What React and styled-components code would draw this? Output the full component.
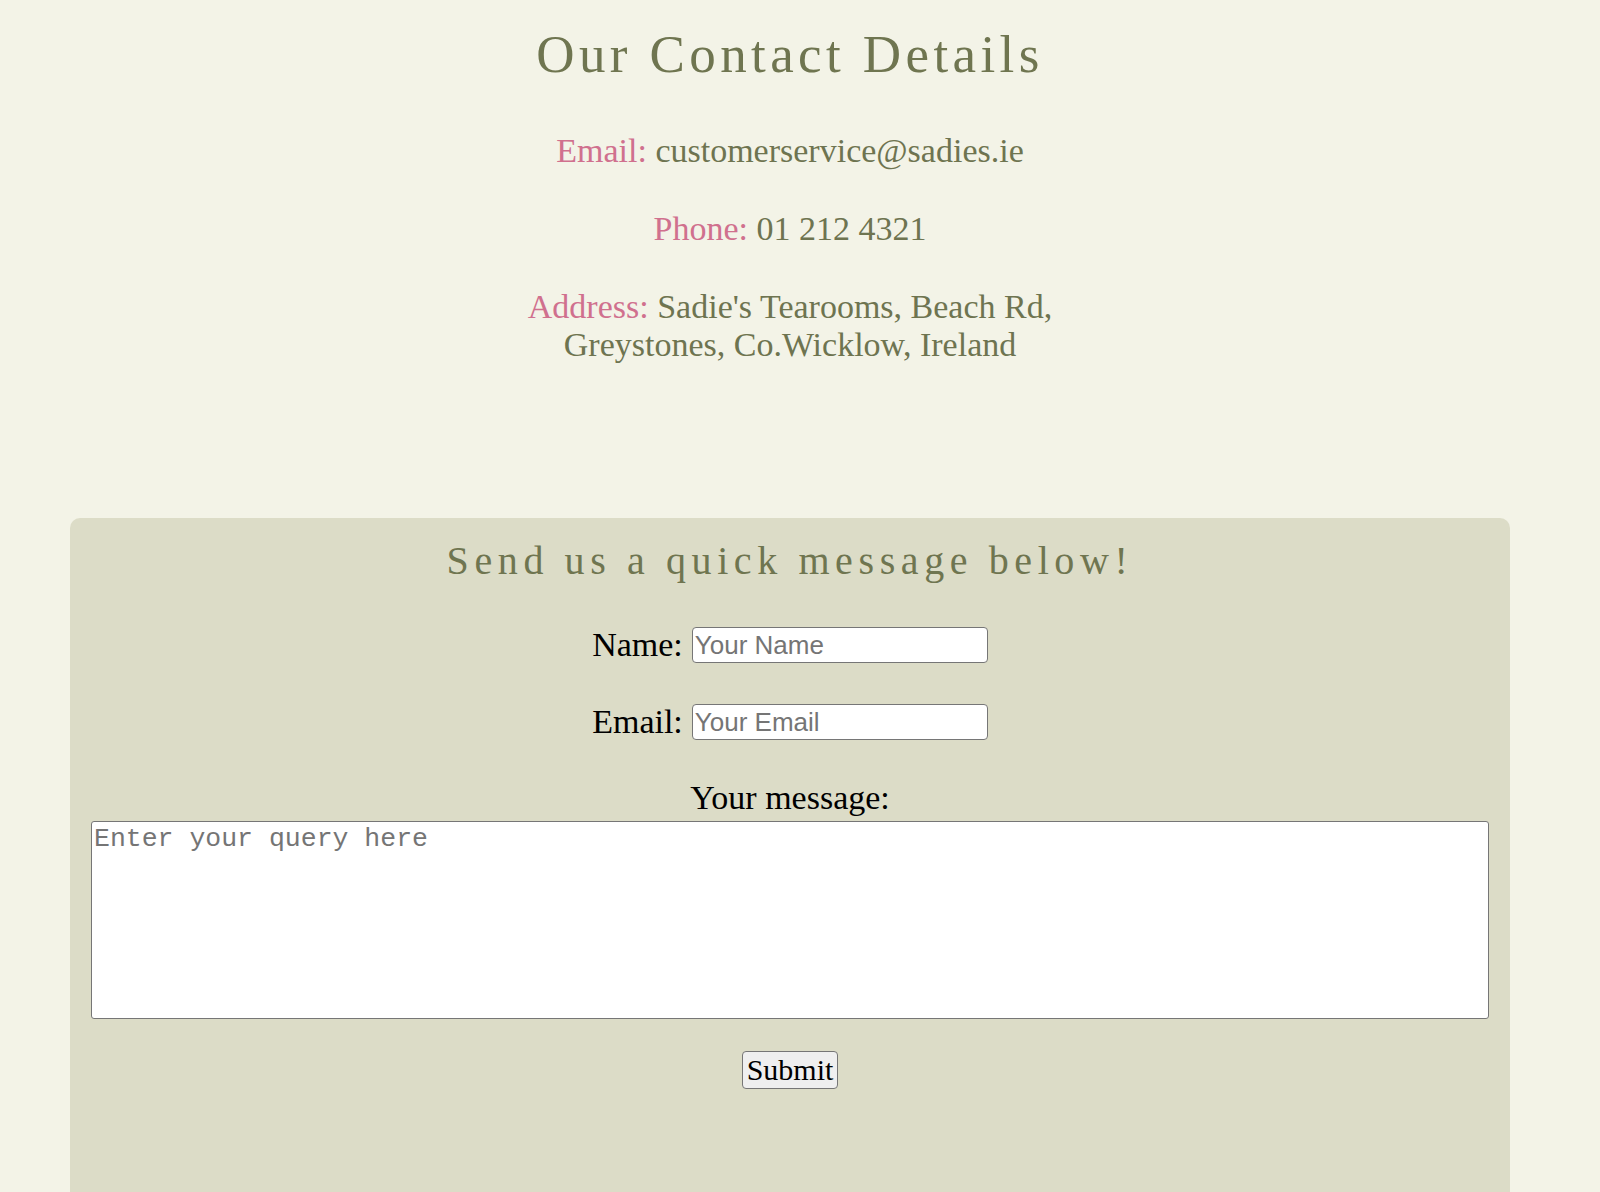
import React from 'react';
import styled, { createGlobalStyle } from 'styled-components';

const GlobalStyle = createGlobalStyle`
  body {
    margin: 0;
    background: #f3f3e7;
    font-family: "Liberation Serif", "DejaVu Serif", serif;
  }
`;

const details = [
  { label: 'Email:', value: ['customerservice@sadies.ie'] },
  { label: 'Phone:', value: ['01 212 4321'] },
  { label: 'Address:', value: ["Sadie's Tearooms, Beach Rd,", 'Greystones, Co.Wicklow, Ireland'] },
];

const App = () => {
  const [name, setName] = React.useState('');
  const [email, setEmail] = React.useState('');
  const [message, setMessage] = React.useState('');

  return (
    <Page>
      <GlobalStyle />
      <ContactSection>
        <Title>Our Contact Details</Title>
        {details.map((d) => (
          <Detail key={d.label}>
            <DetailLabel>{d.label}</DetailLabel>{' '}
            {d.value.map((line, i) => (
              <React.Fragment key={line}>
                {i > 0 && <br />}
                <DetailValue>{line}</DetailValue>
              </React.Fragment>
            ))}
          </Detail>
        ))}
      </ContactSection>

      <FormPanel>
        <FormTitle>Send us a quick message below!</FormTitle>
        <Form onSubmit={(e) => e.preventDefault()}>
          <FieldRow>
            <FieldLabel htmlFor="name">Name:</FieldLabel>
            <TextInput
              id="name"
              type="text"
              placeholder="Your Name"
              value={name}
              onChange={(e) => setName(e.target.value)}
            />
          </FieldRow>
          <FieldRow $gap={41}>
            <FieldLabel htmlFor="email">Email:</FieldLabel>
            <TextInput
              id="email"
              type="email"
              placeholder="Your Email"
              value={email}
              onChange={(e) => setEmail(e.target.value)}
            />
          </FieldRow>
          <MessageLabel htmlFor="message">Your message:</MessageLabel>
          <MessageBox
            id="message"
            placeholder="Enter your query here"
            value={message}
            onChange={(e) => setMessage(e.target.value)}
          />
          <SubmitButton type="submit">Submit</SubmitButton>
        </Form>
      </FormPanel>
    </Page>
  );
};

export default App;

const Page = styled.div`
  padding: 0 90px 0 70px;
  text-align: center;
`;

const ContactSection = styled.section`
  padding-top: 24px;
`;

const Title = styled.h1`
  margin: 0 0 48px;
  font-size: 53px;
  line-height: 60px;
  font-weight: 400;
  letter-spacing: 4.4px;
  color: #6f7550;
`;

const Detail = styled.p`
  margin: 0 0 40px;
  font-size: 34px;
  line-height: 38px;
  &:last-child {
    margin-bottom: 0;
  }
`;

const DetailLabel = styled.span`
  color: #d0708e;
`;

const DetailValue = styled.span`
  color: #6e7450;
`;

const FormPanel = styled.section`
  margin-top: 154px;
  min-height: 700px;
  padding: 19px 0 0;
  background: #dcdcc7;
  border-radius: 10px;
`;

const FormTitle = styled.h2`
  margin: 0;
  font-size: 40px;
  line-height: 48px;
  font-weight: 400;
  letter-spacing: 5.6px;
  color: #6f7550;
`;

const Form = styled.form`
  display: flex;
  flex-direction: column;
  align-items: center;
`;

const FieldRow = styled.div`
  display: flex;
  align-items: center;
  gap: 9px;
  margin-top: ${(p) => p.$gap || 42}px;
`;

const FieldLabel = styled.label`
  font-size: 34px;
  line-height: 36px;
  color: #000;
`;

const TextInput = styled.input`
  box-sizing: border-box;
  width: 296px;
  height: 36px;
  padding: 0 2px;
  border: 1.5px solid #767676;
  border-radius: 4px;
  background: #fff;
  font-family: "Liberation Sans", Arial, sans-serif;
  font-size: 26px;
  color: #000;
  &::placeholder {
    color: #757575;
  }
`;

const MessageLabel = styled.label`
  margin-top: 41px;
  font-size: 34px;
  line-height: 34px;
  color: #000;
`;

const MessageBox = styled.textarea`
  box-sizing: border-box;
  display: block;
  width: 1398px;
  height: 198px;
  margin-top: 6px;
  padding: 2px;
  border: 1.5px solid #767676;
  border-radius: 3px;
  background: #fff;
  font-family: "Liberation Mono", "Courier New", monospace;
  font-size: 26.5px;
  resize: none;
  &::placeholder {
    color: #757575;
  }
`;

const SubmitButton = styled.button`
  box-sizing: border-box;
  width: 96px;
  height: 38px;
  margin-top: 32px;
  padding: 0;
  border: 1.5px solid #767676;
  border-radius: 4px;
  background: #efefef;
  font-family: "Liberation Serif", "DejaVu Serif", serif;
  font-size: 30px;
  line-height: 34px;
  color: #000;
  cursor: pointer;
`;
